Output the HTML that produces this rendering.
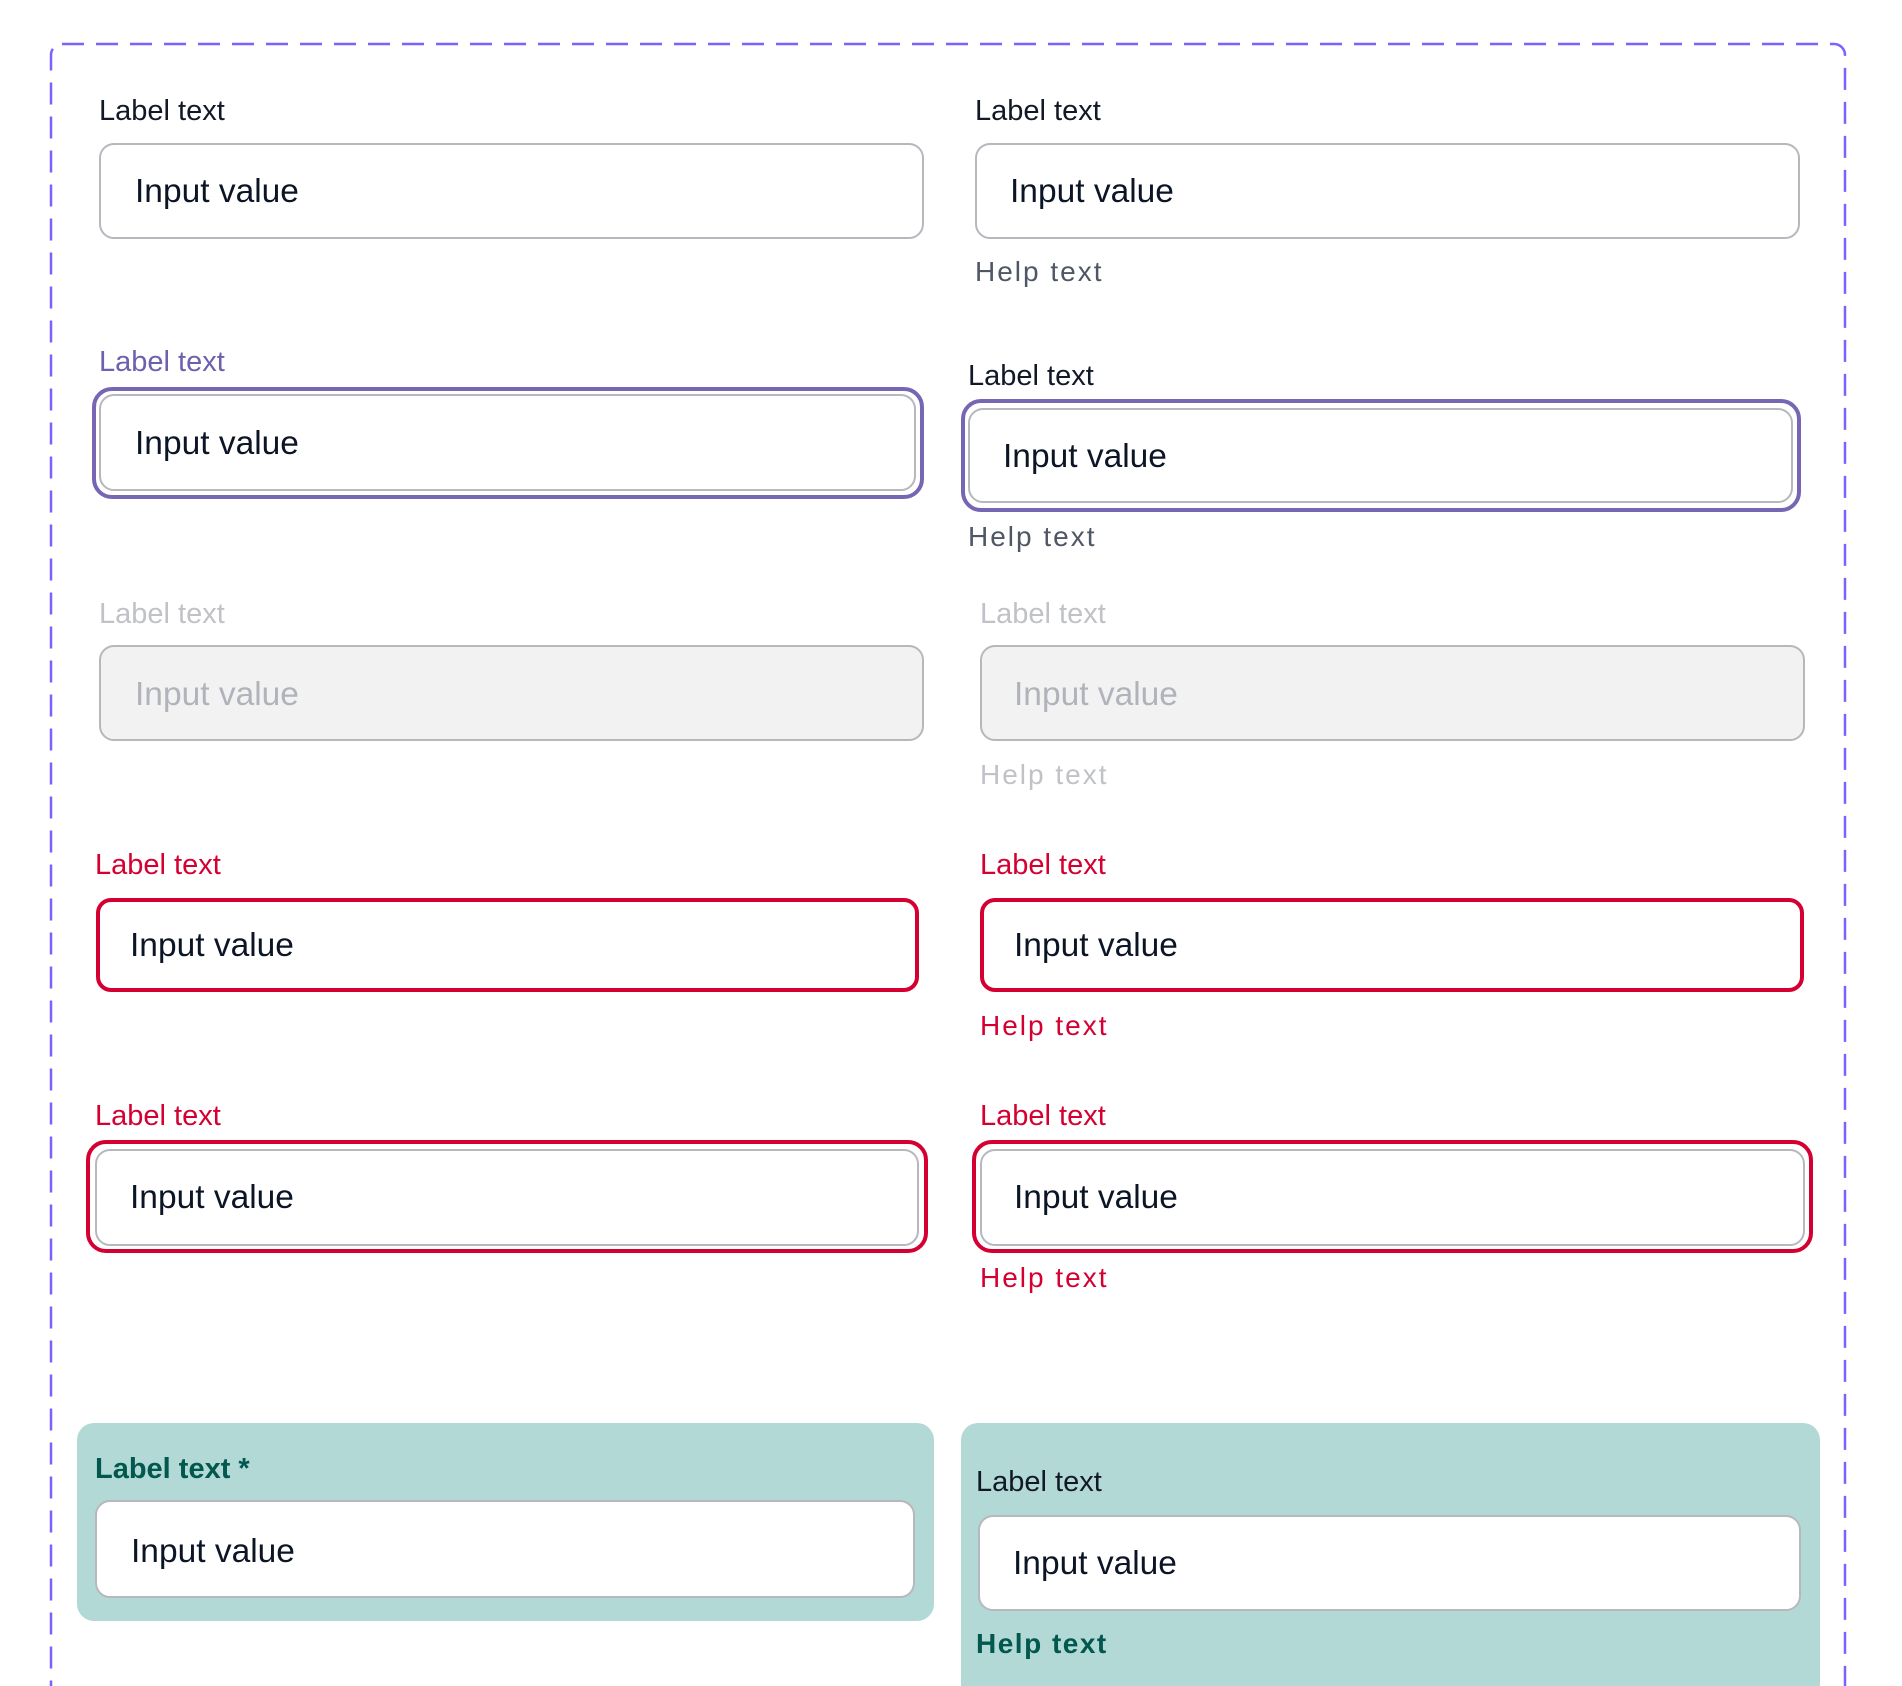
<!DOCTYPE html>
<html><head><meta charset="utf-8"><style>
html,body{margin:0;padding:0;background:#fff;width:1902px;height:1686px;overflow:hidden;position:relative;font-family:"Liberation Sans",sans-serif}
.a{position:absolute;white-space:nowrap}
.lab{font-size:29px;line-height:34px;color:#121826}
.help{font-size:28px;line-height:34px;letter-spacing:2px;color:#4f5665}
.box{position:absolute;box-sizing:border-box;border:2.5px solid #b6b8be;border-radius:15px;background:#fff}
.val{font-size:33.5px;line-height:40px;color:#0b1526}
.ring{position:absolute;box-sizing:border-box;border:4px solid #7666b3;border-radius:20px}
.rred{position:absolute;box-sizing:border-box;border:4px solid #d50032;border-radius:20px}
.red{color:#d50032}
</style></head><body>
<svg class="a" style="left:0;top:0" width="1902" height="1686"><rect x="51" y="44" width="1794" height="1700" rx="11" fill="none" stroke="#7b61ff" stroke-width="2.5" stroke-dasharray="22 12"/></svg>

<div class="a lab" style="left:99px;top:94px">Label text</div>
<div class="box" style="left:99px;top:143px;width:825px;height:96px"></div>
<div class="a val" style="left:135px;top:172px">Input value</div>
<div class="a lab" style="left:975px;top:94px">Label text</div>
<div class="box" style="left:975px;top:143px;width:825px;height:96px"></div>
<div class="a val" style="left:1010px;top:172px">Input value</div>
<div class="a help" style="left:975px;top:255px">Help text</div>

<div class="a lab" style="left:99px;top:345px;color:#6e5fb0">Label text</div>
<div class="ring" style="left:92px;top:387px;width:832px;height:112px"></div>
<div class="box" style="left:99px;top:394px;width:817px;height:97px"></div>
<div class="a val" style="left:135px;top:424px">Input value</div>
<div class="a lab" style="left:968px;top:359px">Label text</div>
<div class="ring" style="left:961px;top:399px;width:840px;height:113px"></div>
<div class="box" style="left:968px;top:408px;width:825px;height:95px"></div>
<div class="a val" style="left:1003px;top:437px">Input value</div>
<div class="a help" style="left:968px;top:520px">Help text</div>

<div class="a lab" style="left:99px;top:597px;color:#c0c2c7">Label text</div>
<div class="box" style="left:99px;top:645px;width:825px;height:96px;background:#f2f2f2"></div>
<div class="a val" style="left:135px;top:675px;color:#b0b3ba">Input value</div>
<div class="a lab" style="left:980px;top:597px;color:#c0c2c7">Label text</div>
<div class="box" style="left:980px;top:645px;width:825px;height:96px;background:#f2f2f2"></div>
<div class="a val" style="left:1014px;top:675px;color:#b0b3ba">Input value</div>
<div class="a help" style="left:980px;top:758px;color:#c0c2c7">Help text</div>

<div class="a lab red" style="left:95px;top:848px">Label text</div>
<div class="rred" style="left:96px;top:898px;width:823px;height:94px;border-radius:15px"></div>
<div class="a val" style="left:130px;top:926px">Input value</div>
<div class="a lab red" style="left:980px;top:848px">Label text</div>
<div class="rred" style="left:980px;top:898px;width:824px;height:94px;border-radius:15px"></div>
<div class="a val" style="left:1014px;top:926px">Input value</div>
<div class="a help red" style="left:980px;top:1009px">Help text</div>

<div class="a lab red" style="left:95px;top:1099px">Label text</div>
<div class="rred" style="left:86px;top:1140px;width:842px;height:113px"></div>
<div class="box" style="left:95px;top:1149px;width:824px;height:97px"></div>
<div class="a val" style="left:130px;top:1178px">Input value</div>
<div class="a lab red" style="left:980px;top:1099px">Label text</div>
<div class="rred" style="left:972px;top:1140px;width:841px;height:113px"></div>
<div class="box" style="left:980px;top:1149px;width:825px;height:97px"></div>
<div class="a val" style="left:1014px;top:1178px">Input value</div>
<div class="a help red" style="left:980px;top:1261px">Help text</div>

<div class="a" style="left:77px;top:1423px;width:857px;height:198px;background:#b2d9d6;border-radius:17px"></div>
<div class="a lab" style="left:95px;top:1452px;font-weight:bold;color:#02574e">Label text *</div>
<div class="box" style="left:95px;top:1500px;width:820px;height:98px"></div>
<div class="a val" style="left:131px;top:1532px">Input value</div>
<div class="a" style="left:961px;top:1423px;width:859px;height:300px;background:#b2d9d6;border-radius:17px"></div>
<div class="a lab" style="left:976px;top:1465px">Label text</div>
<div class="box" style="left:978px;top:1515px;width:823px;height:96px"></div>
<div class="a val" style="left:1013px;top:1544px">Input value</div>
<div class="a help" style="left:976px;top:1627px;font-weight:bold;color:#02574e;letter-spacing:1.5px">Help text</div>
</body></html>
